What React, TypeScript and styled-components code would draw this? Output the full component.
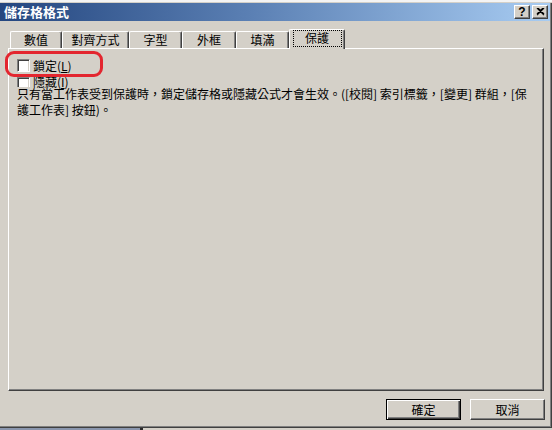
import React from "react";
import styled, { createGlobalStyle } from "styled-components";

const Global = createGlobalStyle`
  html, body { margin: 0; padding: 0; background: #d4d0c8; }
  * { box-sizing: border-box; }
`;

const FONT = `"Noto Sans CJK TC", "Noto Sans", "Liberation Sans", sans-serif`;

const Screen = styled.div`
  width: 552px;
  height: 430px;
  position: relative;
  overflow: hidden;
  background: #d4d0c8;
  display: flex;
  flex-direction: column;
  font-family: ${FONT};
  font-size: 12px;
  color: #000;
`;

const TopEdge = styled.div`
  flex: none;
  height: 3px;
  background: linear-gradient(#f4f4f4 0 2px, #d4d0c8 2px);
`;

const Window = styled.div`
  flex: none;
  height: 425px;
  display: flex;
  flex-direction: column;
  border-right: 1px solid #404040;
  border-bottom: 1px solid #404040;
  box-shadow: inset -1px -1px 0 #808080;
`;

const TitleBar = styled.div`
  flex: none;
  height: 18px;
  margin-right: 1px;
  display: flex;
  align-items: center;
  padding-left: 4px;
  background: linear-gradient(90deg, #24467f 0%, #5a7fb3 45%, #a8ccf2 100%);
`;

const Title = styled.div`
  flex: 1;
  color: #fff;
  font-weight: bold;
  font-size: 13px;
  line-height: 18px;
`;

const CaptionButton = styled.div`
  width: 16px;
  height: 14px;
  margin-right: 2px;
  background: #d4d0c8;
  border-top: 1px solid #fff;
  border-left: 1px solid #fff;
  border-right: 1px solid #404040;
  border-bottom: 1px solid #404040;
  box-shadow: inset -1px -1px 0 #808080;
  display: flex;
  align-items: center;
  justify-content: center;
  font-family: "Liberation Sans", sans-serif;
  font-weight: bold;
  font-size: 12px;
  line-height: 12px;
`;

const TabRow = styled.div`
  flex: none;
  display: flex;
  align-items: flex-end;
  height: 19px;
  margin-top: 8px;
  padding-left: 10px;
  position: relative;
  z-index: 1;
`;

const Tab = styled.div<{ $w: number; $active?: boolean }>`
  width: ${(p) => p.$w}px;
  height: ${(p) => (p.$active ? 20 : 17)}px;
  margin-bottom: ${(p) => (p.$active ? -1 : 0)}px;
  background: #d4d0c8;
  border-top: 1px solid #fff;
  border-left: 1px solid #fff;
  border-right: 1px solid #404040;
  box-shadow: inset -1px 0 0 #808080;
  border-radius: 2px 2px 0 0;
  display: flex;
  align-items: center;
  justify-content: center;
  font-size: 12px;
  line-height: 14px;
  padding-bottom: ${(p) => (p.$active ? 3 : 0)}px;
  position: relative;
`;

const FocusRing = styled.span`
  display: inline-flex;
  align-items: center;
  justify-content: center;
  width: 47px;
  height: 15px;
  outline: 1px dotted #000;
`;

const Panel = styled.div`
  flex: none;
  margin-left: 8px;
  width: 536px;
  height: 343px;
  border-top: 1px solid #fff;
  border-left: 1px solid #fff;
  border-right: 1px solid #404040;
  border-bottom: 1px solid #404040;
  box-shadow: inset -1px -1px 0 #808080;
  padding: 10px 8px 0 8px;
  display: flex;
  flex-direction: column;
`;

const CheckRow = styled.div<{ $h: number; $gap: number }>`
  height: ${(p) => p.$h}px;
  display: flex;
  align-items: flex-start;
  gap: 3px;
  margin-bottom: ${(p) => p.$gap}px;
`;

const Label = styled.span<{ $lh: number }>`
  line-height: ${(p) => p.$lh}px;
`;

const Box = styled.span<{ $h: number }>`
  flex: none;
  width: 13px;
  height: ${(p) => p.$h}px;
  background: #fff;
  border-top: 1px solid #808080;
  border-left: 1px solid #808080;
  border-right: 1px solid #fff;
  border-bottom: ${(p) => (p.$h >= 13 ? "1px solid #fff" : "none")};
  box-shadow: inset 1px 1px 0 #404040, inset -1px 0 0 #d4d0c8;
`;

const Note = styled.div`
  margin-top: -1px;
  line-height: 16px;
  white-space: nowrap;
`;

const Line = styled.div``;

const ButtonRow = styled.div`
  flex: none;
  margin-top: 8px;
  margin-left: 8px;
  width: 537px;
  display: flex;
  justify-content: flex-end;
  gap: 9px;
`;

const Button = styled.div<{ $default?: boolean }>`
  width: 75px;
  height: 21px;
  background: #d4d0c8;
  display: flex;
  align-items: center;
  justify-content: center;
  font-size: 12px;
  ${(p) =>
    p.$default
      ? `border: 1px solid #000;
         box-shadow: inset 1px 1px 0 #fff, inset -1px -1px 0 #404040, inset -2px -2px 0 #808080;`
      : `border-top: 1px solid #fff;
         border-left: 1px solid #fff;
         border-right: 1px solid #404040;
         border-bottom: 1px solid #404040;
         box-shadow: inset -1px -1px 0 #808080;`}
`;

const BottomEdge = styled.div`
  flex: none;
  height: 2px;
  background: linear-gradient(90deg, #8a96ad 0 140px, #2a2a2a 140px 143px, #d4d0c8 143px);
`;

const Highlight = styled.div`
  position: absolute;
  left: 5px;
  top: 51px;
  width: 98px;
  height: 26px;
  border: 3px solid #e3262f;
  border-radius: 9px;
  pointer-events: none;
`;

const tabs: { label: string; w: number }[] = [
  { label: "數值", w: 52 },
  { label: "對齊方式", w: 67 },
  { label: "字型", w: 53 },
  { label: "外框", w: 54 },
  { label: "填滿", w: 53 },
];

export default function App() {
  return (
    <>
      <Global />
      <Screen>
        <TopEdge />
        <Window>
          <TitleBar>
            <Title>儲存格格式</Title>
            <CaptionButton>?</CaptionButton>
            <CaptionButton>
              <svg width="9" height="8" viewBox="0 0 9 8">
                <path d="M1 0 L8 7 M8 0 L1 7 M2 0 L8 6 M7 0 L1 6" stroke="#000" strokeWidth="1.2" fill="none" />
              </svg>
            </CaptionButton>
          </TitleBar>
          <TabRow>
            {tabs.map((t) => (
              <Tab key={t.label} $w={t.w}>
                {t.label}
              </Tab>
            ))}
            <Tab $w={56} $active>
              <FocusRing>保護</FocusRing>
            </Tab>
          </TabRow>
          <Panel>
            <CheckRow $h={13} $gap={5}>
              <Box $h={13} />
              <Label $lh={13}>
                鎖定(<u>L</u>)
              </Label>
            </CheckRow>
            <CheckRow $h={10} $gap={0}>
              <Box $h={10} />
              <Label $lh={9}>
                隱藏(<u>I</u>)
              </Label>
            </CheckRow>
            <Note>
              <Line>只有當工作表受到保護時，鎖定儲存格或隱藏公式才會生效。([校閱] 索引標籤，[變更] 群組，[保</Line>
              <Line>護工作表] 按鈕)。</Line>
            </Note>
          </Panel>
          <ButtonRow>
            <Button $default>確定</Button>
            <Button>取消</Button>
          </ButtonRow>
        </Window>
        <BottomEdge />
        <Highlight />
      </Screen>
    </>
  );
}
